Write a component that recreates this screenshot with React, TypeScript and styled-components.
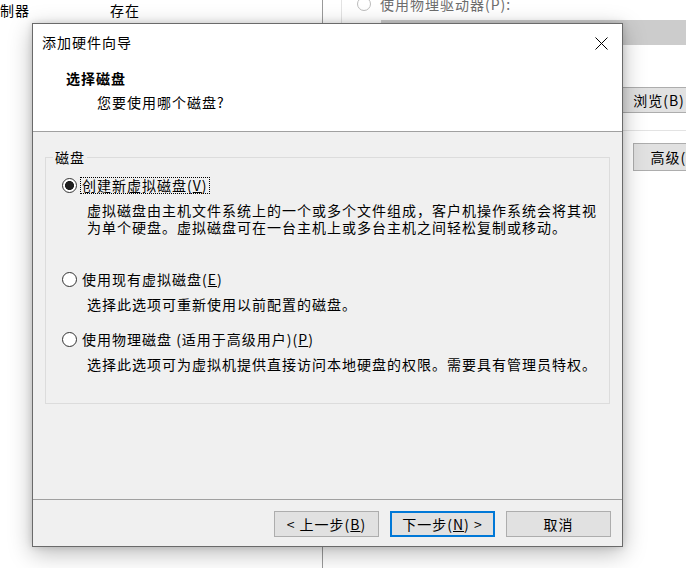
import styled, { createGlobalStyle } from "styled-components";

const GlobalStyle = createGlobalStyle`
  html, body {
    margin: 0;
    padding: 0;
    background: #ffffff;
  }
  body {
    font-family: "Noto Sans CJK SC", "Microsoft YaHei", sans-serif;
    font-size: 14px;
    letter-spacing: 1px;
    color: #000;
    overflow: hidden;
  }
  * {
    box-sizing: border-box;
  }
`;

const Desktop = styled.div`
  position: relative;
  width: 686px;
  height: 568px;
  overflow: hidden;
  background: #fff;
`;

/* settings window behind the wizard */
const SettingsWindow = styled.div`
  display: flex;
  width: 740px;
  height: 568px;
`;

const DeviceList = styled.div`
  width: 323px;
  flex: none;
  border-right: 1px solid #9a9a9a;
`;

const DeviceRow = styled.div`
  display: flex;
  height: 20px;
  line-height: 20px;
  white-space: nowrap;
`;

const DeviceCell = styled.span<{ $w?: number }>`
  width: ${(p) => (p.$w ? `${p.$w}px` : "auto")};
  flex: none;
`;

const DetailPane = styled.div`
  flex: 1;
  display: flex;
  flex-direction: column;
`;

const DriveFrame = styled.div`
  margin: -14px 15px 0 18px;
  border: 1px solid #e3e3e3;
  padding: 8px 15px 17px;
  display: flex;
  flex-direction: column;
`;

const DimRow = styled.div`
  display: flex;
  align-items: center;
  height: 17px;
  gap: 9px;
  color: #6d6d6d;
  white-space: nowrap;
`;

const DimRadio = styled.span`
  width: 14px;
  height: 14px;
  border-radius: 50%;
  border: 1px solid #bcbcbc;
  background: #fff;
  flex: none;
`;

const DisabledCombo = styled.div`
  margin: 8px -3px 0 24px;
  height: 25px;
  background: #cccccc;
`;

const BackButton = styled.div<{ $h: number }>`
  align-self: flex-end;
  width: 100px;
  height: ${(p) => p.$h}px;
  background: #e1e1e1;
  border: 1px solid #adadad;
  display: flex;
  align-items: center;
  justify-content: center;
  white-space: nowrap;
`;

const BrowseButton = styled(BackButton)`
  margin-top: 42px;
`;

const AdvancedButton = styled(BackButton)`
  margin: 12px 7px 0 0;
`;

/* wizard dialog */
const Dialog = styled.div`
  position: absolute;
  left: 32px;
  top: 23px;
  width: 591px;
  height: 524px;
  border: 1px solid #6a6a6a;
  background: #f0f0f0;
  box-shadow: 0 6px 22px rgba(0, 0, 0, 0.28), 0 0 7px rgba(0, 0, 0, 0.14);
  display: flex;
  flex-direction: column;
`;

const Header = styled.div`
  height: 107px;
  flex: none;
  background: #fff;
`;

const TitleBar = styled.div`
  height: 38px;
  display: flex;
  align-items: center;
  padding-left: 9px;
`;

const Title = styled.div`
  flex: 1;
  line-height: 18px;
  margin-top: -2px;
`;

const CloseButton = styled.div`
  width: 42px;
  height: 38px;
  display: flex;
  align-items: center;
  justify-content: center;
`;

const PageHeading = styled.div`
  padding: 7px 0 0 33px;
  line-height: 18px;
  font-weight: 700;
`;

const PageSubtitle = styled.div`
  padding: 6px 0 0 64px;
  line-height: 18px;
`;

const Separator = styled.div`
  height: 1px;
  flex: none;
  background: #a0a0a0;
`;

const Body = styled.div`
  flex: 1;
  padding: 25px 12px 0;
`;

const GroupBox = styled.div`
  position: relative;
  height: 247px;
  border: 1px solid #dcdcdc;
  padding: 19px 0 0 16px;
`;

const GroupLabel = styled.span`
  position: absolute;
  top: -9px;
  left: 7px;
  padding: 0 2px;
  line-height: 17px;
  background: #f0f0f0;
`;

const Option = styled.div<{ $first?: boolean }>`
  margin-top: ${(p) => (p.$first ? 0 : 18)}px;
`;

const OptionRow = styled.div`
  display: flex;
  align-items: center;
  height: 17px;
  white-space: nowrap;
`;

const Radio = styled.span<{ $checked?: boolean }>`
  width: 15px;
  height: 15px;
  flex: none;
  border-radius: 50%;
  border: 1px solid #333;
  background: ${(p) =>
    p.$checked
      ? "radial-gradient(circle, #1f1f1f 0 4.2px, #fff 4.8px)"
      : "#fff"};
`;

const OptionLabel = styled.span<{ $focused?: boolean }>`
  margin-left: 3px;
  padding: 0 1px;
  line-height: 15px;
  border: 1px dotted ${(p) => (p.$focused ? "#000" : "transparent")};
`;

const Description = styled.div<{ $rows: number }>`
  margin: 8px 0 0 25px;
  line-height: 17px;
  min-height: ${(p) => p.$rows * 17}px;
  white-space: nowrap;
`;

const Line = styled.span`
  display: block;
  height: 17px;
`;

const Footer = styled.div`
  height: 46px;
  flex: none;
  display: flex;
  justify-content: flex-end;
  align-items: flex-start;
  gap: 11px;
  padding: 11px 11px 0 0;
`;

const Button = styled.button<{ $primary?: boolean }>`
  width: 105px;
  height: 26px;
  padding: 0;
  font: inherit;
  letter-spacing: inherit;
  color: #000;
  background: #e1e1e1;
  border: ${(p) => (p.$primary ? "2px solid #0078d7" : "1px solid #adadad")};
  white-space: nowrap;
`;

const options = [
  {
    label: "创建新虚拟磁盘",
    key: "V",
    checked: true,
    rows: 3,
    lines: [
      "虚拟磁盘由主机文件系统上的一个或多个文件组成，客户机操作系统会将其视",
      "为单个硬盘。虚拟磁盘可在一台主机上或多台主机之间轻松复制或移动。",
    ],
  },
  {
    label: "使用现有虚拟磁盘",
    key: "E",
    rows: 1,
    lines: ["选择此选项可重新使用以前配置的磁盘。"],
  },
  {
    label: "使用物理磁盘 (适用于高级用户)",
    key: "P",
    rows: 1,
    lines: ["选择此选项可为虚拟机提供直接访问本地硬盘的权限。需要具有管理员特权。"],
  },
];

const CloseIcon = () => (
  <svg width="13" height="13" viewBox="0 0 13 13">
    <path d="M0.5 0.5 L12.5 12.5 M12.5 0.5 L0.5 12.5" stroke="#000" strokeWidth="1" fill="none" />
  </svg>
);

const App = () => {
  return (
    <Desktop>
      <GlobalStyle />
      <SettingsWindow>
        <DeviceList>
          <DeviceRow>
            <DeviceCell $w={110}>制器</DeviceCell>
            <DeviceCell>存在</DeviceCell>
          </DeviceRow>
        </DeviceList>
        <DetailPane>
          <DriveFrame>
            <DimRow>
              <DimRadio />
              <span>使用物理驱动器(P):</span>
            </DimRow>
            <DisabledCombo />
            <BrowseButton $h={26}>浏览(B)</BrowseButton>
          </DriveFrame>
          <AdvancedButton $h={28}>高级(V)...</AdvancedButton>
        </DetailPane>
      </SettingsWindow>

      <Dialog>
        <Header>
          <TitleBar>
            <Title>添加硬件向导</Title>
            <CloseButton>
              <CloseIcon />
            </CloseButton>
          </TitleBar>
          <PageHeading>选择磁盘</PageHeading>
          <PageSubtitle>您要使用哪个磁盘?</PageSubtitle>
        </Header>
        <Separator />
        <Body>
          <GroupBox>
            <GroupLabel>磁盘</GroupLabel>
            {options.map((o, i) => (
              <Option key={o.key} $first={i === 0}>
                <OptionRow>
                  <Radio $checked={o.checked} />
                  <OptionLabel $focused={o.checked}>
                    {o.label}(<u>{o.key}</u>)
                  </OptionLabel>
                </OptionRow>
                <Description $rows={o.rows}>
                  {o.lines.map((l) => (
                    <Line key={l}>{l}</Line>
                  ))}
                </Description>
              </Option>
            ))}
          </GroupBox>
        </Body>
        <Separator />
        <Footer>
          <Button>
            &lt; 上一步(<u>B</u>)
          </Button>
          <Button $primary>
            下一步(<u>N</u>) &gt;
          </Button>
          <Button>取消</Button>
        </Footer>
      </Dialog>
    </Desktop>
  );
};

export default App;
